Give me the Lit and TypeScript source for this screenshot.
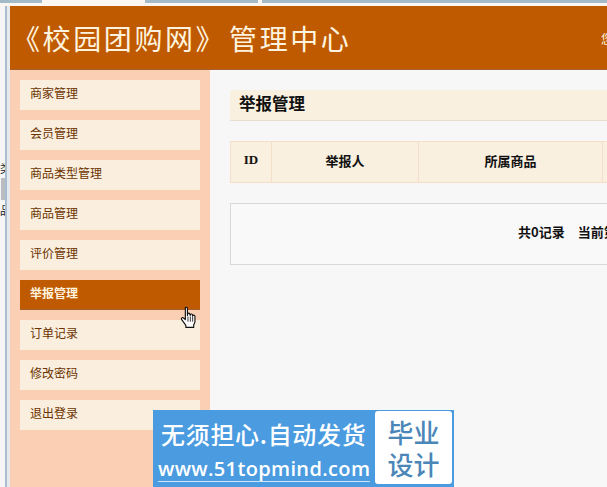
import { LitElement, html, css } from "lit";
import { customElement } from "lit/decorators.js";

const MENU = ["商家管理", "会员管理", "商品类型管理", "商品管理", "评价管理", "举报管理", "订单记录", "修改密码", "退出登录"];
const ACTIVE = "举报管理";
const COLS = [
  { label: "ID", w: 41 },
  { label: "举报人", w: 147 },
  { label: "所属商品", w: 184 },
  { label: "", w: 20 },
];

@customElement("app-root")
export class AppRoot extends LitElement {
  static styles = css`
    :host {
      display: block;
      position: relative;
      width: 607px;
      height: 487px;
      overflow: hidden;
      background: #fff;
      font-family: "Liberation Serif", "Noto Sans CJK SC", serif;
    }
    .topstrip { height: 6px; display: flex; background: #fbf6f0; }
    .tab { height: 3px; background: #a3bac9; }
    .t1 { width: 42px; }
    .gap { width: 103px; }
    .t2 { width: 113px; }
    .gap2 { width: 4px; }
    .t3 { flex: 1; }
    .frame { display: flex; height: 481px; }
    .edge { width: 10px; flex: none; background: linear-gradient(90deg, #f5f5f5 0 5px, #a9bccd 5px 7px, #e6eaee 7px 10px); position: relative; }
    .edge span { position: absolute; left: 0; width: 5px; overflow: hidden; font: 11px "Noto Sans CJK SC", sans-serif; color: #222; line-height: 12px; }
    .edge .e1 { top: 156px; }
    .edge .e2 { top: 198px; }
    .edge .thumb { position: absolute; left: 1px; top: 172px; width: 4px; height: 22px; background: #b9bcc0; }
    .main { flex: 1; min-width: 0; display: flex; flex-direction: column; }
    header {
      height: 64px; flex: none; background: #c05a00; display: flex; align-items: center; justify-content: space-between;
      color: #fdf3df; padding-left: 2px; box-shadow: inset 0 -1px 0 #a9602a;
    }
    h1 { margin: 0; font: 400 28px/1 "Noto Sans CJK SC", serif; letter-spacing: 2.6px; word-spacing: -6px; white-space: nowrap; }
    .welcome { font: 12px "Noto Sans CJK SC", sans-serif; width: 6px; overflow: hidden; white-space: nowrap; color: #fdf3df; }
    .body { flex: 1; display: flex; min-height: 0; }
    nav { width: 200px; flex: none; box-sizing: border-box; background: #fbcfb4; padding: 10px; display: flex; flex-direction: column; gap: 10px; }
    .item { height: 30px; flex: none; box-sizing: border-box; background: #faeede; color: #6b3300; padding-left: 10px; font: 12px/25px "Noto Sans CJK SC", sans-serif; }
    .item.active { background: #c05a00; color: #fdf3df; font-weight: 700; box-shadow: inset 0 -1px 0 #a9602a; }
    .content { flex: 1; min-width: 0; background: #f7f7f7; padding: 20px 0 0 20px; }
    .title { height: 31px; box-sizing: border-box; background: #f9f0e0; border-bottom: 1px solid #e8dccf; font: 700 16.5px/26px "Noto Sans CJK SC", sans-serif; color: #111; padding-left: 9px; }
    .thead { margin-top: 20px; display: flex; height: 42px; box-sizing: border-box; background: #f9f0e0; border: 1px solid #f5dfcb; border-right: 0; }
    .th { flex: none; box-sizing: border-box; border-right: 1px solid #f5dfcb; padding-bottom: 4px; display: flex; align-items: center; justify-content: center; font: 700 13px "Noto Sans CJK SC", sans-serif; color: #111; }
    .th.last { flex: 1; border-right: 0; }
    .th.id { font-family: "Liberation Serif", serif; }
    .pager { margin-top: 20px; height: 62px; box-sizing: border-box; background: #f9f9f9; border: 1px solid #d9d9d9; border-right: 0; display: flex; align-items: center; gap: 13px; padding: 0 0 6px 287px; font: 700 13px "Noto Sans CJK SC", sans-serif; color: #111; white-space: nowrap; overflow: hidden; }
    .cursor { position: absolute; left: 180px; top: 306px; width: 18px; height: 23px; }
    .ad { position: absolute; left: 153px; top: 410px; width: 301px; height: 77px; box-sizing: border-box; background: #4a9be0; color: #fff; display: flex; justify-content: space-between; padding: 1px 2px 3px 0; }
    .ad-l { width: 222px; flex: none; overflow: hidden; padding: 9px 0 0 8px; box-sizing: border-box; }
    .ad-l b { display: block; font: 500 24px/28px "Noto Sans CJK SC", sans-serif; white-space: nowrap; letter-spacing: .7px; }
    .ad-l i { display: block; font: 600 20px/24px "Open Sans", sans-serif; letter-spacing: .35px; margin: 9px 0 0 -3px; white-space: nowrap; border-bottom: 1px solid #cfe4f6; width: 212px; }
    .ad-r { width: 77px; background: #fff; border-radius: 3px; color: #4b86b8; font: 500 26px/32px "Noto Sans CJK SC", sans-serif; text-align: center; display: flex; flex-direction: column; justify-content: center; }
  `;

  render() {
    return html`
      <div class="topstrip">
        <div class="tab t1"></div><div class="gap"></div><div class="tab t2"></div><div class="gap2"></div><div class="tab t3"></div>
      </div>
      <div class="frame">
        <div class="edge"><span class="e1">类</span><div class="thumb"></div><span class="e2">品</span></div>
        <div class="main">
          <header>
            <h1>《校园团购网》 管理中心</h1>
            <div class="welcome">您好</div>
          </header>
          <div class="body">
            <nav>
              ${MENU.map((m) => html`<div class="item ${m === ACTIVE ? "active" : ""}">${m}</div>`)}
            </nav>
            <div class="content">
              <div class="title">举报管理</div>
              <div class="thead">
                ${COLS.map(
                  (c, i) => html`<div
                    class="th ${i === 0 ? "id" : ""} ${i === COLS.length - 1 ? "last" : ""}"
                    style="width:${c.w}px"
                  >${c.label}</div>`
                )}
              </div>
              <div class="pager"><span>共0记录</span><span>当前第1页</span></div>
            </div>
          </div>
        </div>
      </div>
      <svg class="cursor" viewBox="0 0 17 22">
        <path d="M5 1.5c1-.8 2 0 2 1V9l.3-1.5c.4-1 1.8-.9 2 .2L9.6 9l.3-.8c.5-.9 1.8-.6 1.9.4l.1 1 .4-.5c.7-.7 1.9-.2 1.9.9v4.5c0 1.500-.7 2.600-1.200 3.500v2.500H5.500v-2L1.500 13c-.9-1.200.6-2.600 1.800-1.500L5 13V2.500z" fill="#fff" stroke="#111" stroke-width="1.100" stroke-linejoin="round"/>
        <path d="M7.500 10v5M9.800 10v5M12 10v5" stroke="#111" stroke-width=".8" fill="none"/>
      </svg>
      <div class="ad">
        <div class="ad-l"><b>无须担心.自动发货</b><i>www.51topmind.com</i></div>
        <div class="ad-r"><div>毕业<br />设计</div></div>
      </div>
    `;
  }
}
